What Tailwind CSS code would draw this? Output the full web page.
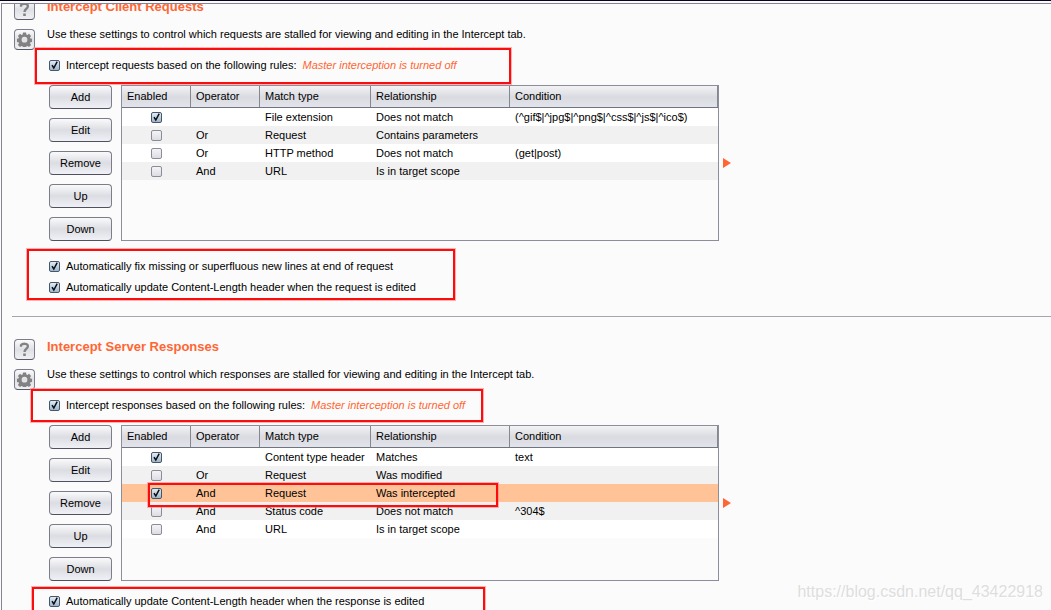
<!DOCTYPE html>
<html lang="en">
<head>
<meta charset="utf-8">
<meta name="viewport" content="width=device-width, initial-scale=1">
<title>Proxy options</title>
<script src="https://cdn.jsdelivr.net/npm/@tailwindcss/browser@4"></script>
</head>
<body class="relative h-screen overflow-hidden bg-[#fbfbfb] font-['Liberation_Sans',Arial,sans-serif] text-[11px] leading-4 text-black">
<div id="app" class="flex h-full flex-col border-t border-[#05051e]"></div>

<div class="pointer-events-none absolute right-2 bottom-2 text-[16px] leading-5 text-[#dedede] [text-shadow:1px_1px_0_#fff]">https://blog.csdn.net/qq_43422918</div>

<script>
const gear = `<svg viewBox="0 0 15 15" class="size-[15px]" fill="#828282" aria-hidden="true"><path fill-rule="evenodd" d="M6 0.6h3l.4 1.9 1 .4 1.6-1.1 2.1 2.1-1.1 1.6.4 1 1.9.4v3l-1.9.4-.4 1 1.1 1.6-2.1 2.1-1.6-1.1-1 .4-.4 1.9h-3l-.4-1.9-1-.4-1.6 1.1-2.1-2.1L2 11.300l-.4-1-1.9-.4v-3l1.900-.4.4-1L.9 3.900 3 1.800l1.600 1.100 1-.4zM7.500 4.800a2.900 2.900 0 1 0 0 5.800 2.900 2.900 0 0 0 0-5.800z"/></svg>`;
const tick = `<svg viewBox="0 0 11 11" class="pointer-events-none absolute inset-0 hidden size-[11px] overflow-visible peer-checked:block" fill="none" stroke="#0c0e12" stroke-width="1.500" aria-hidden="true"><path d="M3 5.200 4.800 8 8.200 1.700"/></svg>`;
const box = (attrs, on) => `<span class="relative block size-[11px] shrink-0"><input type="checkbox" ${attrs} ${on ? 'checked' : ''} class="peer block size-[11px] appearance-none rounded-[2px] border border-[#8a8d96] bg-linear-to-b from-[#f4f4f7] to-[#dcdde3] checked:border-[#44566c] checked:from-[#e2ecf5] checked:to-[#9fb6cb]">${tick}</span>`;
const check = (id, text) => `<div class="flex items-center gap-[6px]">${box(`id="${id}"`, true)}<label for="${id}">${text}</label></div>`;
const mark = 'pointer-events-none absolute z-10 border-2 border-[#fb0d0d] ring-1 ring-[#ff8080]/60';
const iconButton = 'flex size-[21px] items-center justify-center rounded-[4px] border border-[#7b7e88] border-b-[#565a66] bg-linear-to-b from-[#fbfbfc] via-[#dfe0e5] to-[#f0f0f4]';

function table(rows, name) {
  const th = 'pb-px pl-[5px] text-left font-normal shadow-[inset_-1px_0_0_#85888f]';
  return `<div class="min-h-[156px] w-[598px] border border-[#8c8f9b]">
    <table class="w-full table-fixed border-separate border-spacing-0" aria-label="${name}">
      <colgroup><col class="w-[69px]"><col class="w-[69px]"><col class="w-[111px]"><col class="w-[139px]"><col></colgroup>
      <thead><tr class="h-[22px] bg-linear-to-b from-[#f3f3f5] via-[#dadbe1] to-[#e3e5ec]">
        ${['Enabled', 'Operator', 'Match type', 'Relationship', 'Condition'].map(h => `<th scope="col" class="border-b border-[#71747f] ${th}">${h}</th>`).join('')}
      </tr></thead>
      <tbody>${rows.map((r, i) => `<tr class="h-[18px] ${r[5] ? 'bg-[#ffc397]' : i % 2 ? 'bg-[#f1f1f1]' : 'bg-white'}">
        <td class="pl-[29px]">${box(`aria-label="Enable rule ${i + 1}"`, r[0])}</td>
        ${r.slice(1, 5).map(c => `<td class="pl-[5px] whitespace-nowrap">${c}</td>`).join('')}</tr>`).join('')}
      </tbody>
    </table></div>`;
}

function section(s) {
  return `<section class="flex gap-3 pl-3">
    <div class="flex flex-col gap-[9px]">
      <button type="button" aria-label="Help" class="${iconButton} text-[#828282]"><svg viewBox="0 0 11 15" class="h-[15px] w-[11px]" fill="none" stroke="currentColor" aria-hidden="true"><path stroke-width="2.300" d="M2 4.800V3.200C3.300 1.300 8.900 1 8.900 4.200 8.900 7 5.500 6.500 5.500 10"/><path fill="currentColor" stroke="none" d="M4.200 11.500h2.600V14H4.200z"/></svg></button>
      <button type="button" aria-label="Options" class="${iconButton}">${gear}</button>
    </div>
    <div class="flex flex-col items-start">
      <h2 class="text-[13px] leading-4 font-bold text-[#ff6633]">${s.title}</h2>
      <p class="mt-[11px]">${s.text}</p>
      <div class="relative mt-[15px] pl-[2px]">
        <div class="${mark} ${s.mark}"></div>
        <div class="flex items-center gap-[6px]">${check(s.id, s.rule)}<em class="text-[#ff6633]">Master interception is turned off</em></div>
      </div>
      <div class="mt-3 flex items-center pl-[2px]">
        <div class="flex w-[63px] flex-col gap-[9px]">
          ${['Add', 'Edit', 'Remove', 'Up', 'Down'].map(b => `<button type="button" class="h-6 rounded-[4px] border border-[#7b7e88] border-b-[#4f525e] bg-linear-to-b from-[#fafafb] via-[#dcdde3] to-[#f0f1f6]">${b}</button>`).join('')}
        </div>
        <div class="relative ml-[9px]">${table(s.rows, s.title)}${s.overlay || ''}</div>
        <button type="button" aria-label="Expand" class="ml-1"><svg viewBox="0 0 8 10" class="h-[10px] w-2" fill="#ff6633" aria-hidden="true"><path d="M0 0 8 5 0 10z"/></svg></button>
      </div>
      <div class="relative flex flex-col gap-[5px] pl-[2px] ${s.end}">
        <div class="${mark} ${s.endMark}"></div>
        ${s.options.map((o, i) => check(s.id + i, o)).join('')}
      </div>
    </div>
  </section>`;
}

document.getElementById('app').innerHTML = `
<main class="mt-[2px] ml-px min-h-0 flex-1 overflow-hidden border-t border-l border-[#85848f]">
  <div class="-mt-[5px]">
  ${section({ id: 'requests', title: 'Intercept Client Requests',
    text: 'Use these settings to control which requests are stalled for viewing and editing in the Intercept tab.',
    rule: 'Intercept requests based on the following rules:',
    mark: '-top-[9px] -left-3 h-9 w-[476px]',
    rows: [[1, '', 'File extension', 'Does not match', '(^gif$|^jpg$|^png$|^css$|^js$|^ico$)'],
      [0, 'Or', 'Request', 'Contains parameters', ''],
      [0, 'Or', 'HTTP method', 'Does not match', '(get|post)'],
      [0, 'And', 'URL', 'Is in target scope', '']],
    end: 'mt-[17px]',
    endMark: '-top-[9px] -left-5 h-[51px] w-[428px]',
    options: ['Automatically fix missing or superfluous new lines at end of request', 'Automatically update Content-Length header when the request is edited'] })}
  <hr class="mt-[21px] mb-[22px] ml-[10px] border-[#a3a6b0]">
  ${section({ id: 'responses', title: 'Intercept Server Responses',
    text: 'Use these settings to control which responses are stalled for viewing and editing in the Intercept tab.',
    rule: 'Intercept responses based on the following rules:',
    mark: '-top-2 -left-4 h-[33px] w-[452px]',
    rows: [[1, '', 'Content type header', 'Matches', 'text'],
      [0, 'Or', 'Request', 'Was modified', ''],
      [1, 'And', 'Request', 'Was intercepted', '', 1],
      [0, 'And', 'Status code', 'Does not match', '^304$'],
      [0, 'And', 'URL', 'Is in target scope', '']],
    overlay: `<div class="${mark} top-[58px] left-[27px] h-6 w-[350px]"></div>`,
    end: 'mt-3',
    endMark: '-top-[6px] -left-[15px] h-[51px] w-[453px]',
    options: ['Automatically update Content-Length header when the response is edited'] })}
  </div>
</main>`;
</script>
</body>
</html>
